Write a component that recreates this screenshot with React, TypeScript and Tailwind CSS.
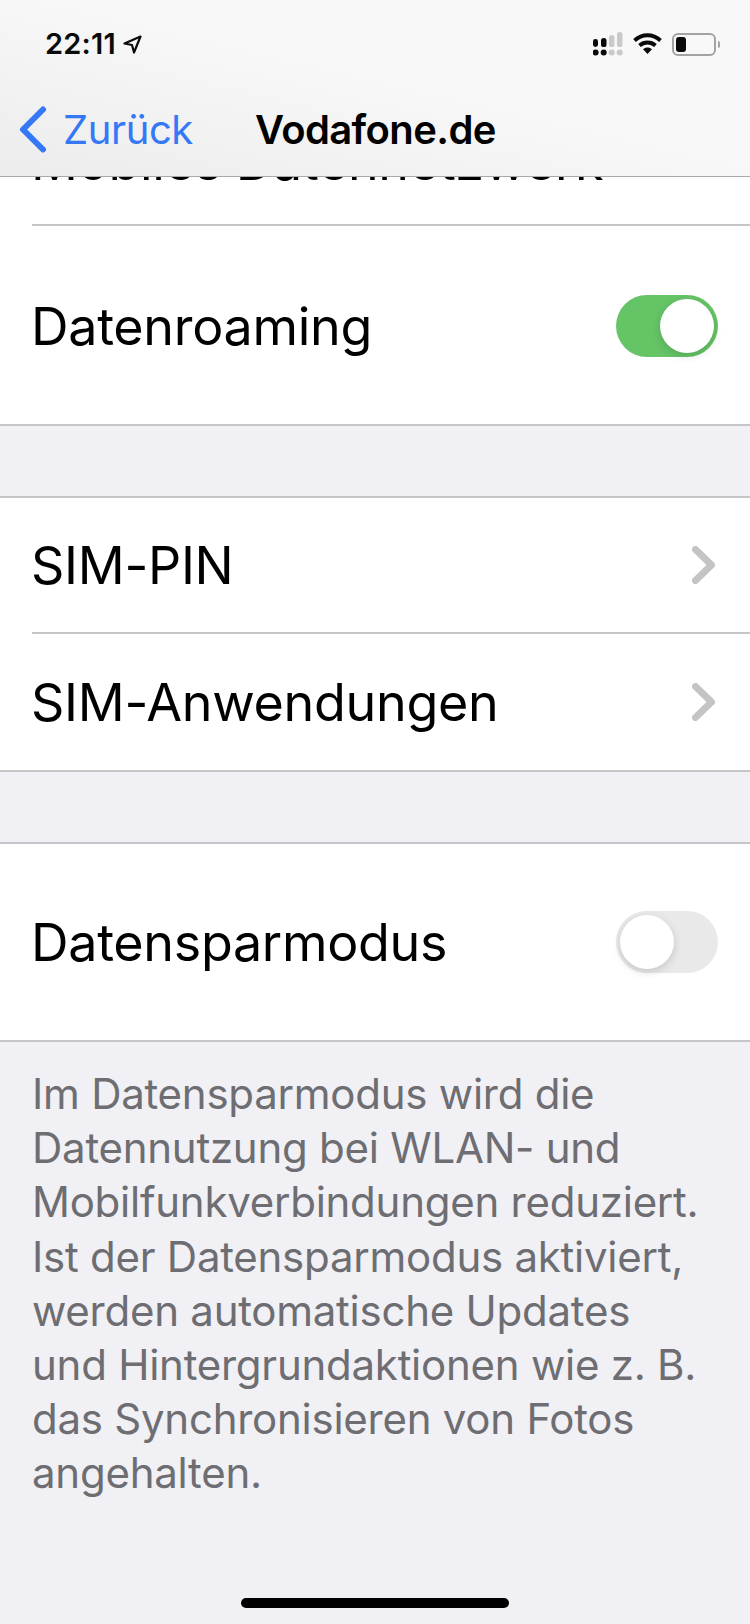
import React from 'react';

const font = { fontFamily: 'Inter, "Liberation Sans", sans-serif' };

const Chevron = () => (
    <svg width="23" height="38" viewBox="0 0 23 38" fill="none" className="mr-[3px]">
        <path d="M3.5 3.5 L19.5 19 L3.5 34.5" stroke="#c4c4c7" strokeWidth="7" strokeLinecap="round" strokeLinejoin="round" />
    </svg>
);

const Toggle = ({ on }: { on: boolean }) => (
    <div className={`w-[102px] h-[62px] rounded-full p-[4px] flex ${on ? 'bg-[#65c466] justify-end' : 'bg-[#e9e9ea] justify-start'}`}>
        <div className="w-[54px] h-[54px] rounded-full bg-white shadow-[0_3px_8px_rgba(0,0,0,0.15)]" />
    </div>
);

const StatusIcons = () => (
    <div className="flex items-center">
        <svg width="30" height="24" viewBox="0 0 30 24" className="mr-[10px]">
            <rect x="0" y="7" width="5" height="8" rx="2.4" fill="#0a0a0a" />
            <rect x="8" y="6" width="5.5" height="9" rx="2.6" fill="#0a0a0a" />
            <rect x="16" y="3" width="5.5" height="12" rx="2.6" fill="#c9c9c9" />
            <rect x="24" y="0" width="5.5" height="15" rx="2.6" fill="#c9c9c9" />
            <circle cx="2.6" cy="20.5" r="3" fill="#0a0a0a" />
            <circle cx="10.7" cy="20.5" r="3" fill="#0a0a0a" />
            <circle cx="18.7" cy="20.5" r="3" fill="#c9c9c9" />
            <circle cx="26.7" cy="20.5" r="3" fill="#c9c9c9" />
        </svg>
        <svg width="29" height="22" viewBox="0 0 29 22" className="mr-[10px]">
            <path d="M1.5 7.5 C9 0.5 20 0.5 27.5 7.5" stroke="#0a0a0a" strokeWidth="3.8" fill="none" />
            <path d="M6.5 12.5 C11 8.5 18 8.5 22.5 12.5" stroke="#0a0a0a" strokeWidth="3.8" fill="none" />
            <path d="M10 16.2 C12.8 14 16.2 14 19 16.2 L14.5 21 Z" fill="#0a0a0a" />
        </svg>
        <div className="w-[44px] h-[23px] rounded-[6px] border-2 border-[#a3a3a3] p-[2px] flex">
            <div className="w-[10px] h-full rounded-[3px] bg-[#0a0a0a]" />
        </div>
        <div className="w-[2px] h-[7px] ml-[2px] rounded-r-full bg-[#a3a3a3]" />
    </div>
);

const Row = ({ label, height, children }: { label: string; height: string; children: React.ReactNode }) => (
    <div className={`${height} flex items-center justify-between px-[32px]`}>
        <span className="-ml-[1px] text-[52px] pt-[2px] leading-none tracking-[-0.3px] text-black">{label}</span>
        {children}
    </div>
);

const Line = () => <div className="h-[2px] shrink-0 bg-[#c6c6c8]" />;

export default function App() {
    return (
        <div className="w-[750px] h-[1624px] overflow-hidden bg-[#f0f0f5] flex flex-col" style={font}>
            <div className="h-[177px] shrink-0 border-b border-[#a9a9ab] bg-[linear-gradient(to_top_right,#ececec,#f8f8f8_55%)] flex flex-col">
                <div className="h-[88px] shrink-0 pl-[45px] pr-[30px] flex items-center justify-between">
                    <div className="flex items-center gap-[7px]">
                        <span className="text-[29px] font-semibold text-[#0a0a0a] tracking-[0.2px]">22:11</span>
                        <svg width="19" height="19" viewBox="0 0 19 19" fill="none">
                            <path d="M17.5 1.5 L1.5 8.5 L9 10 L11 17.5 Z" stroke="#0a0a0a" strokeWidth="2.2" strokeLinejoin="round" />
                        </svg>
                    </div>
                    <StatusIcons />
                </div>
                <div className="flex-1 flex items-center pl-[19px] pb-[5px]">
                    <svg width="28" height="47" viewBox="0 0 28 47" fill="none">
                        <path d="M24 3.5 L4 23.5 L24 43.5" stroke="#3478f6" strokeWidth="6" strokeLinecap="round" strokeLinejoin="round" />
                    </svg>
                    <span className="ml-[16px] text-[40px] text-[#3478f6] tracking-[-0.4px] leading-none">Zurück</span>
                    <span className="ml-[62px] text-[40px] font-semibold text-black tracking-[-0.6px] leading-none">Vodafone.de</span>
                </div>
            </div>

            <div className="bg-white">
                <div className="h-[47px] overflow-hidden pl-[31px]">
                    <div className="text-[52px] leading-none -mt-[41px] tracking-[-0.35px] text-black whitespace-nowrap">Mobiles Datennetzwerk</div>
                </div>
                <div className="pl-[32px]"><Line /></div>
                <Row label="Datenroaming" height="h-[198px] pt-[2px]"><Toggle on /></Row>
            </div>
            <Line />
            <div className="h-[70px] shrink-0" />
            <Line />
            <div className="bg-white">
                <Row label="SIM-PIN" height="h-[134px]"><Chevron /></Row>
                <div className="pl-[32px]"><Line /></div>
                <Row label="SIM-Anwendungen" height="h-[136px]"><Chevron /></Row>
            </div>
            <Line />
            <div className="h-[70px] shrink-0" />
            <Line />
            <div className="bg-white">
                <Row label="Datensparmodus" height="h-[196px]"><Toggle on={false} /></Row>
            </div>
            <Line />
            <p className="pl-[32px] pr-[20px] pt-[25px] text-[42px] leading-[54.2px] tracking-[-0.25px] text-[#6d6d72]">
                Im Datensparmodus wird die<br />
                Datennutzung bei WLAN- und<br />
                Mobilfunkverbindungen reduziert.<br />
                Ist der Datensparmodus aktiviert,<br />
                werden automatische Updates<br />
                und Hintergrundaktionen wie z. B.<br />
                das Synchronisieren von Fotos<br />
                angehalten.
            </p>
            <div className="mt-auto mb-[16px] mx-auto w-[268px] h-[10px] rounded-full bg-black" />
        </div>
    );
}
